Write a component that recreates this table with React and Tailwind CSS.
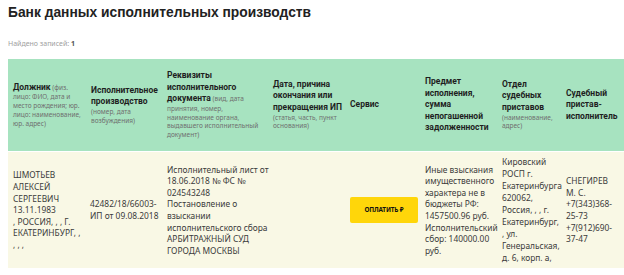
import React from "react";

const font = { fontFamily: '"Noto Sans", "Open Sans", sans-serif' };
const headFont = { fontFamily: 'Roboto, "Noto Sans", sans-serif' };

function Head({ bold, inline, notes = [] }) {
  return (
    <div className="text-[#6f6f6f]">
      {bold.map((line, i) => (
        <div
          key={i}
          className="whitespace-nowrap text-[8.5px] leading-[11.6px] font-bold text-[#1f1f1f]"
          style={headFont}
        >
          {line}
          {i === bold.length - 1 && inline ? (
            <span className="text-[6.5px] font-normal text-[#6f6f6f]" style={font}> {inline}</span>
          ) : null}
        </div>
      ))}
      {notes.map((line, i) => (
        <div key={"n" + i} className="whitespace-nowrap text-[6.5px] leading-[8.8px]">
          {line}
        </div>
      ))}
    </div>
  );
}

function Lines({ lines, className = "" }) {
  return (
    <div className={`text-[8.4px] leading-[11.6px] text-[#3b3b3b] ${className}`}>
      {lines.map((line, i) => (
        <div key={i} className="whitespace-nowrap">
          {line}
        </div>
      ))}
    </div>
  );
}

export default function App() {
  const columns = [79, 75, 106, 77, 75, 77, 64, 80];

  return (
    <div className="w-[624px] h-[275px] overflow-hidden bg-white" style={font}>
      <div className="pl-2 pt-[4px]">
        <h1
          className="text-[13.8px] leading-[17px] font-bold text-[#222]"
          style={{ fontFamily: '"Liberation Sans", Arial, sans-serif' }}
        >
          Банк данных исполнительных производств
        </h1>
        <p className="mt-[19px] text-[7px] leading-[8px] text-[#a0a0a0]">
          Найдено записей: <span className="font-bold text-[#555]">1</span>
        </p>

        <table className="mt-[11px] table-fixed border-separate border-spacing-0 w-[633px]">
          <colgroup>
            {columns.map((w, i) => (
              <col key={i} style={{ width: w }} />
            ))}
          </colgroup>
          <thead>
            <tr className="h-[92px] bg-[#a7e3c0] align-middle text-left">
              <th className="px-[5px] font-normal">
                <Head
                  bold={["Должник"]}
                  inline="(физ."
                  notes={["лицо: ФИО, дата и", "место рождения; юр.", "лицо: наименование,", "юр. адрес)"]}
                />
              </th>
              <th className="px-[4px] font-normal">
                <Head bold={["Исполнительное", "производство"]} notes={["(номер, дата", "возбуждения)"]} />
              </th>
              <th className="px-[5px] font-normal">
                <Head
                  bold={["Реквизиты", "исполнительного", "документа"]}
                  inline="(вид, дата"
                  notes={["принятия, номер,", "наименование органа,", "выдавшего исполнительный", "документ)"]}
                />
              </th>
              <th className="px-[5px] font-normal">
                <Head bold={["Дата, причина", "окончания или", "прекращения ИП"]} notes={["(статья, часть, пункт", "основания)"]} />
              </th>
              <th className="px-[5px] font-normal">
                <Head bold={["Сервис"]} />
              </th>
              <th className="px-[5px] font-normal">
                <Head bold={["Предмет", "исполнения,", "сумма", "непогашенной", "задолженности"]} />
              </th>
              <th className="px-[5px] font-normal">
                <Head bold={["Отдел", "судебных", "приставов"]} notes={["(наименование,", "адрес)"]} />
              </th>
              <th className="px-[5px] font-normal">
                <Head bold={["Судебный", "пристав-", "исполнитель"]} />
              </th>
            </tr>
          </thead>
          <tbody>
            <tr className="h-[1px]">
              <td colSpan={8} className="h-[1px] p-0 bg-white"></td>
            </tr>
            <tr className="h-[116px] bg-[#f9f8e5] align-middle">
              <td className="px-[5px]">
                <Lines
                  lines={[
                    "ШМОТЬЕВ",
                    "АЛЕКСЕЙ",
                    "СЕРГЕЕВИЧ",
                    "13.11.1983",
                    ", РОССИЯ, , , Г.",
                    "ЕКАТЕРИНБУРГ, ,",
                    ", , ,",
                  ]}
                />
              </td>
              <td className="px-[3px]">
                <Lines lines={["42482/18/66003-", "ИП от 09.08.2018"]} />
              </td>
              <td className="px-[5px]">
                <Lines
                  lines={[
                    "Исполнительный лист от",
                    "18.06.2018 № ФС №",
                    "024543248",
                    "Постановление о",
                    "взыскании",
                    "исполнительского сбора",
                    "АРБИТРАЖНЫЙ СУД",
                    "ГОРОДА МОСКВЫ",
                  ]}
                />
              </td>
              <td className="px-[5px]"></td>
              <td className="px-[5px]">
                <button className="flex h-[26px] w-[68px] items-center justify-center rounded-[2px] bg-[#ffd60a] text-[6.4px] font-bold text-[#111] tracking-tight">
                  ОПЛАТИТЬ ₽
                </button>
              </td>
              <td className="px-[5px]">
                <Lines
                  lines={[
                    "Иные взыскания",
                    "имущественного",
                    "характера не в",
                    "бюджеты РФ:",
                    "1457500.96 руб.",
                    "Исполнительский",
                    "сбор: 140000.00",
                    "руб.",
                  ]}
                />
              </td>
              <td className="px-[5px]">
                <Lines
                  className="leading-[12.1px]"
                  lines={[
                    "Кировский",
                    "РОСП г.",
                    "Екатеринбурга",
                    "620062,",
                    "Россия, , , г.",
                    "Екатеринбург,",
                    ", ул.",
                    "Генеральская,",
                    "д. 6, корп. а,",
                  ]}
                />
              </td>
              <td className="px-[5px]">
                <Lines lines={["СНЕГИРЕВ", "М. С.", "+7(343)368-", "25-73", "+7(912)690-", "37-47"]} />
              </td>
            </tr>
          </tbody>
        </table>
      </div>
    </div>
  );
}
